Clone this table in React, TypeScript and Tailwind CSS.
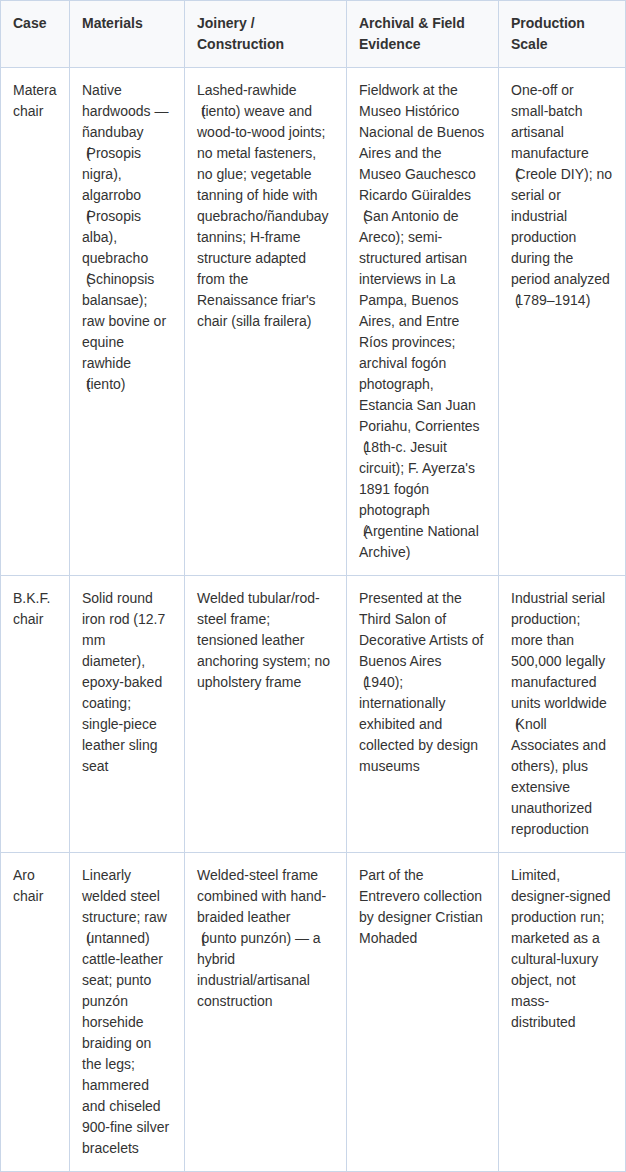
import React from "react";

type Cell = string[];

const header: Cell[] = [
  ["Case"],
  ["Materials"],
  ["Joinery /", "Construction"],
  ["Archival & Field", "Evidence"],
  ["Production", "Scale"],
];

const rows: Cell[][] = [
  [
    ["Matera", "chair"],
    [
      "Native",
      "hardwoods —",
      "ñandubay",
      " (Prosopis",
      "nigra),",
      "algarrobo",
      " (Prosopis",
      "alba),",
      "quebracho",
      " (Schinopsis",
      "balansae);",
      "raw bovine or",
      "equine",
      "rawhide",
      " (tiento)",
    ],
    [
      "Lashed-rawhide",
      " (tiento) weave and",
      "wood-to-wood joints;",
      "no metal fasteners,",
      "no glue; vegetable",
      "tanning of hide with",
      "quebracho/ñandubay",
      "tannins; H-frame",
      "structure adapted",
      "from the",
      "Renaissance friar's",
      "chair (silla frailera)",
    ],
    [
      "Fieldwork at the",
      "Museo Histórico",
      "Nacional de Buenos",
      "Aires and the",
      "Museo Gauchesco",
      "Ricardo Güiraldes",
      " (San Antonio de",
      "Areco); semi-",
      "structured artisan",
      "interviews in La",
      "Pampa, Buenos",
      "Aires, and Entre",
      "Ríos provinces;",
      "archival fogón",
      "photograph,",
      "Estancia San Juan",
      "Poriahu, Corrientes",
      " (18th-c. Jesuit",
      "circuit); F. Ayerza's",
      "1891 fogón",
      "photograph",
      " (Argentine National",
      "Archive)",
    ],
    [
      "One-off or",
      "small-batch",
      "artisanal",
      "manufacture",
      " (Creole DIY); no",
      "serial or",
      "industrial",
      "production",
      "during the",
      "period analyzed",
      " (1789–1914)",
    ],
  ],
  [
    ["B.K.F.", "chair"],
    [
      "Solid round",
      "iron rod (12.7",
      "mm",
      "diameter),",
      "epoxy-baked",
      "coating;",
      "single-piece",
      "leather sling",
      "seat",
    ],
    [
      "Welded tubular/rod-",
      "steel frame;",
      "tensioned leather",
      "anchoring system; no",
      "upholstery frame",
    ],
    [
      "Presented at the",
      "Third Salon of",
      "Decorative Artists of",
      "Buenos Aires",
      " (1940);",
      "internationally",
      "exhibited and",
      "collected by design",
      "museums",
    ],
    [
      "Industrial serial",
      "production;",
      "more than",
      "500,000 legally",
      "manufactured",
      "units worldwide",
      " (Knoll",
      "Associates and",
      "others), plus",
      "extensive",
      "unauthorized",
      "reproduction",
    ],
  ],
  [
    ["Aro", "chair"],
    [
      "Linearly",
      "welded steel",
      "structure; raw",
      " (untanned)",
      "cattle-leather",
      "seat; punto",
      "punzón",
      "horsehide",
      "braiding on",
      "the legs;",
      "hammered",
      "and chiseled",
      "900-fine silver",
      "bracelets",
    ],
    [
      "Welded-steel frame",
      "combined with hand-",
      "braided leather",
      " (punto punzón) — a",
      "hybrid",
      "industrial/artisanal",
      "construction",
    ],
    [
      "Part of the",
      "Entrevero collection",
      "by designer Cristian",
      "Mohaded",
    ],
    [
      "Limited,",
      "designer-signed",
      "production run;",
      "marketed as a",
      "cultural-luxury",
      "object, not",
      "mass-",
      "distributed",
    ],
  ],
];

function Line({ text }: { text: string }) {
  if (text.startsWith(" (")) {
    return (
      <div className="whitespace-pre">
        {"\u00a0"}
        <span className="mr-[-4px]">(</span>
        {text.slice(2)}
      </div>
    );
  }
  return <div className="whitespace-pre">{text}</div>;
}

function CellBox({ lines, head }: { lines: Cell; head?: boolean }) {
  return (
    <div
      className={
        "px-3 py-3 text-[14px] leading-[21px] text-[#333333] " +
        (head ? "bg-[#f8f9fb] font-bold" : "bg-white")
      }
    >
      {lines.map((l, i) => (
        <Line key={i} text={l} />
      ))}
    </div>
  );
}

export default function App() {
  return (
    <div
      className="w-[626px] bg-white"
      style={{ fontFamily: '"Liberation Sans", Arial, sans-serif' }}
    >
      <div className="grid grid-cols-[68px_114px_161px_151px_126px] gap-px bg-[#c9d6e8] p-px">
        {header.map((c, i) => (
          <CellBox key={"h" + i} lines={c} head />
        ))}
        {rows.map((r, ri) =>
          r.map((c, ci) => <CellBox key={ri + "-" + ci} lines={c} />)
        )}
      </div>
    </div>
  );
}
